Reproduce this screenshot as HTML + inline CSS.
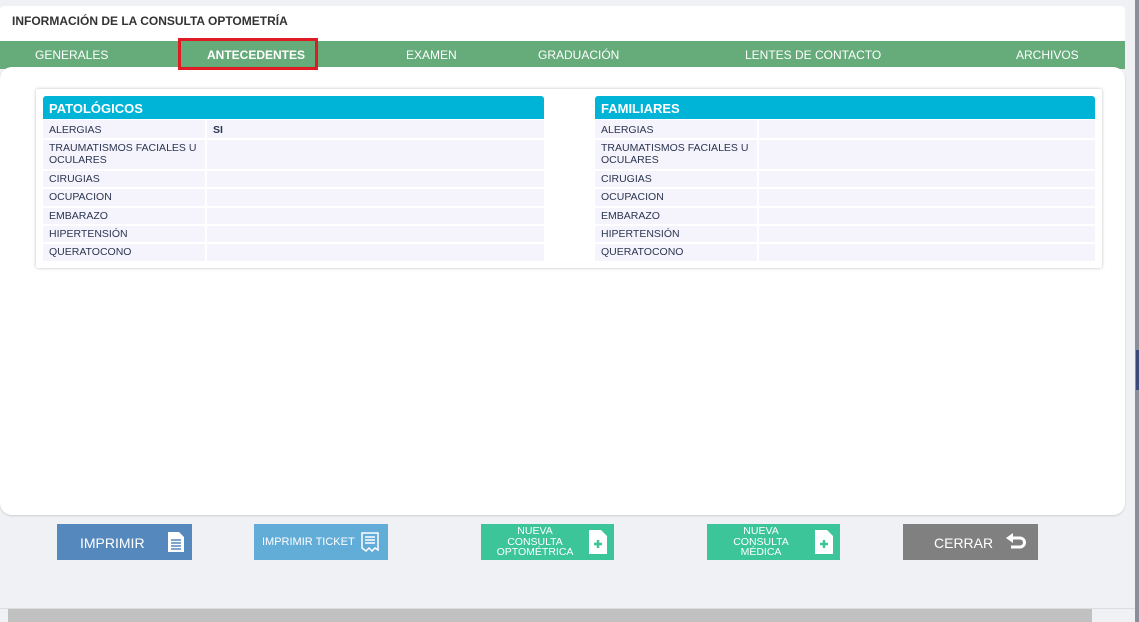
<!DOCTYPE html>
<html><head><meta charset="utf-8"><style>
*{box-sizing:border-box;margin:0;padding:0}
body{width:1139px;height:622px;overflow:hidden;background:#f0f1f4;font-family:"Liberation Sans",sans-serif;position:relative}
.abs{position:absolute}
.hdr{left:0;top:6px;width:1125px;height:36px;background:#fff;border-radius:4px 4px 0 0;font-size:12px;font-weight:bold;color:#333;padding:8px 12px}
.nav{left:0;top:41px;width:1125px;height:28px;background:#66ab7a}
.nav span{position:absolute;top:7px;color:#fff;font-size:12px}
.body{left:0;top:67px;width:1125px;height:448px;background:#fff;border-radius:12px;box-shadow:0 1px 2px rgba(0,0,0,.15)}
.panel{left:36px;top:89px;width:1066px;height:179px;background:#fff;box-shadow:0 0 3px rgba(0,0,0,.25);border-radius:2px}
.tbl{top:96px;width:501px}
.th{height:23px;background:#00b4d8;color:#fff;font-weight:bold;font-size:13px;padding:5px 6px;border-radius:3px 3px 0 0}
.row{display:flex;margin-top:2px;font-size:10.5px;color:#2b3550}
.row div{background:#f5f4fc;padding:4px 6px 0}
.row .l{width:162px;margin-right:2px}
.row .v{flex:1;font-weight:bold}
.btn{top:524px;height:36px;color:#fff;font-family:"Liberation Sans",sans-serif}
.btn .t{position:absolute;text-align:center}
.btn svg{position:absolute}
</style></head><body>
<div class="abs hdr">INFORMACIÓN DE LA CONSULTA OPTOMETRÍA</div>
<div class="abs nav">
<span style="left:35px">GENERALES</span>
<span style="left:207px;font-weight:bold">ANTECEDENTES</span>
<span style="left:406px">EXAMEN</span>
<span style="left:538px">GRADUACIÓN</span>
<span style="left:745px">LENTES DE CONTACTO</span>
<span style="left:1016px">ARCHIVOS</span>
</div>
<div class="abs body"></div>
<div class="abs" style="left:178px;top:38px;width:140px;height:32px;border:3px solid #e01b24"></div>
<div class="abs panel"></div>
<div class="abs tbl" style="left:43px">
<div class="th">PATOLÓGICOS</div>
<div class="row" style="margin-top:1px"><div class="l" style="height:18px">ALERGIAS</div><div class="v">SI</div></div>
<div class="row"><div class="l" style="height:29px;line-height:12px;padding-top:2px">TRAUMATISMOS FACIALES U OCULARES</div><div class="v"></div></div>
<div class="row"><div class="l" style="height:16px;padding-top:2px">CIRUGIAS</div><div class="v"></div></div>
<div class="row"><div class="l" style="height:17px;padding-top:2px">OCUPACION</div><div class="v"></div></div>
<div class="row"><div class="l" style="height:16px;padding-top:2px">EMBARAZO</div><div class="v"></div></div>
<div class="row"><div class="l" style="height:16px;padding-top:2px">HIPERTENSIÓN</div><div class="v"></div></div>
<div class="row"><div class="l" style="height:17px;padding-top:2px">QUERATOCONO</div><div class="v"></div></div>
</div>
<div class="abs tbl" style="left:595px;width:500px">
<div class="th">FAMILIARES</div>
<div class="row" style="margin-top:1px"><div class="l" style="height:18px">ALERGIAS</div><div class="v"></div></div>
<div class="row"><div class="l" style="height:29px;line-height:12px;padding-top:2px">TRAUMATISMOS FACIALES U OCULARES</div><div class="v"></div></div>
<div class="row"><div class="l" style="height:16px;padding-top:2px">CIRUGIAS</div><div class="v"></div></div>
<div class="row"><div class="l" style="height:17px;padding-top:2px">OCUPACION</div><div class="v"></div></div>
<div class="row"><div class="l" style="height:16px;padding-top:2px">EMBARAZO</div><div class="v"></div></div>
<div class="row"><div class="l" style="height:16px;padding-top:2px">HIPERTENSIÓN</div><div class="v"></div></div>
<div class="row"><div class="l" style="height:17px;padding-top:2px">QUERATOCONO</div><div class="v"></div></div>
</div>

<div class="abs btn" style="left:57px;width:135px;background:#5589bd;font-size:14px"><div class="t" style="left:23px;top:11px">IMPRIMIR</div>
<svg width="16" height="20" style="left:111px;top:8px" viewBox="0 0 16 20"><path d="M0 0H11L16 5V20H0Z" fill="#fff"/><path d="M3 8H13M3 11H13M3 14H13M3 17H13" stroke="#5589bd" stroke-width="1.5"/></svg></div>
<div class="abs btn" style="left:254px;width:134px;background:#62acd8;font-size:11px"><div class="t" style="left:8px;top:12px">IMPRIMIR TICKET</div>
<svg width="18" height="20" style="left:107px;top:8px" viewBox="0 0 18 20"><path d="M1 1H17V18L14 16L11 19L8 16L5 19L1 16Z" fill="none" stroke="#fff" stroke-width="1.5"/><path d="M4 5H14M4 8H14M4 11H14" stroke="#fff" stroke-width="1.5"/></svg></div>
<div class="abs btn" style="left:481px;width:133px;background:#3cc598;font-size:10.5px;line-height:10.5px"><div class="t" style="left:0;width:108px;top:2px">NUEVA<br>CONSULTA<br>OPTOMÉTRICA</div>
<svg width="18" height="24" style="left:108px;top:6px" viewBox="0 0 18 24"><path d="M0 0H12L18 6V24H0Z" fill="#fff"/><path d="M9 10V18M5 14H13" stroke="#3cc598" stroke-width="2.5"/></svg></div>
<div class="abs btn" style="left:707px;width:133px;background:#3cc598;font-size:10.5px;line-height:10.5px"><div class="t" style="left:0;width:108px;top:2px">NUEVA<br>CONSULTA<br>MÉDICA</div>
<svg width="18" height="24" style="left:108px;top:6px" viewBox="0 0 18 24"><path d="M0 0H12L18 6V24H0Z" fill="#fff"/><path d="M9 10V18M5 14H13" stroke="#3cc598" stroke-width="2.5"/></svg></div>
<div class="abs btn" style="left:903px;width:135px;background:#808080;font-size:14px"><div class="t" style="left:31px;top:11px">CERRAR</div>
<svg width="22" height="18" style="left:102px;top:9px" viewBox="0 0 22 18"><path d="M7 5H15A4.5 4.5 0 0 1 15 14H6" fill="none" stroke="#fff" stroke-width="3"/><path d="M1 5L8 0V10Z" fill="#fff"/></svg></div>

<div class="abs" style="left:8px;top:609px;width:1084px;height:13px;background:#c1c1c1"></div>
<div class="abs" style="left:0;top:608px;width:1135px;height:1px;background:#ddd"></div>
<div class="abs" style="left:1135px;top:0;width:4px;height:622px;background:#8a8f99"></div>
<div class="abs" style="left:1136px;top:350px;width:3px;height:40px;background:#3b4a7a"></div>
</body></html>
